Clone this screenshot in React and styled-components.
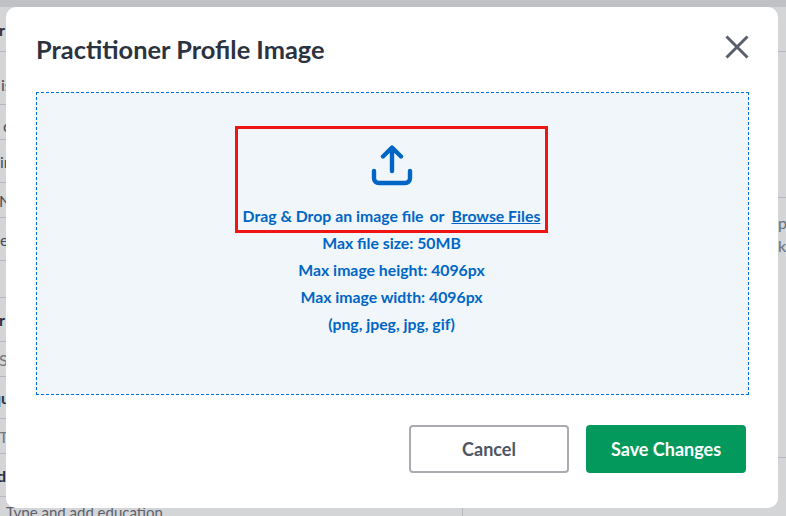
import React from "react";
import styled, { createGlobalStyle } from "styled-components";

const GlobalStyle = createGlobalStyle`
  html, body {
    margin: 0;
    height: 100%;
    overflow: hidden;
    background: #fff;
    font-family: "Lato", "Liberation Sans", sans-serif;
  }
  * {
    box-sizing: border-box;
  }
`;

const leftRows = [
  { height: 45, text: "r", strong: true, shift: -1 },
  { height: 53, text: "is", pad: 12, shift: 1 },
  { height: 35, text: "c", pad: 6, shift: 3 },
  { height: 43, text: "ir" },
  { height: 35, text: "N", shift: -1 },
  { height: 43, text: "e", shift: 0 },
  { height: 37, text: "" },
  { height: 44, text: "r", strong: true, shift: -1 },
  { height: 35, text: "S", muted: true, shift: -1 },
  { height: 42, text: "qu", strong: true, shift: -8 },
  { height: 35, text: "T", muted: true, shift: -1 },
  { height: 43, text: "d", strong: true, shift: -3 },
];

const limits = [
  "Max file size: 50MB",
  "Max image height: 4096px",
  "Max image width: 4096px",
  "(png, jpeg, jpg, gif)",
];

export default function App() {
  return (
    <>
      <GlobalStyle />
      <Page>
        <TopStrip />
        <Columns>
          <LeftColumn>
            {leftRows.map((row, id) => (
              <FormRow key={id} $height={row.height} $pad={row.pad}>
                <RowText $strong={row.strong} $muted={row.muted} $shift={row.shift}>
                  {row.text}
                </RowText>
              </FormRow>
            ))}
            <LastRow>Type and add education</LastRow>
          </LeftColumn>
          <RightColumn>
            <RightLine $height={45} />
            <RightBlock>
              <RightText>p</RightText>
              <RightText>ke</RightText>
            </RightBlock>
          </RightColumn>
        </Columns>
      </Page>
      <Overlay>
        <Modal>
          <ModalHeader>
            <Title>Practitioner Profile Image</Title>
            <CloseButton aria-label="Close">
              <svg width="24" height="24" viewBox="0 0 24 24" fill="none">
                <path
                  d="M1.5 1.5L22.5 22.5M22.5 1.5L1.5 22.5"
                  stroke="#5a606b"
                  strokeWidth="3"
                />
              </svg>
            </CloseButton>
          </ModalHeader>
          <DropZone>
            <Highlight>
              <UploadIcon width="42" height="41" viewBox="0 0 42 41" fill="none">
                <path
                  d="M21 26V3M12 11.5L21 2.5L30 11.5"
                  stroke="#0066c5"
                  strokeWidth="4.4"
                  strokeLinecap="round"
                  strokeLinejoin="round"
                />
                <path
                  d="M3 26V33C3 36 5 38 8 38H34C37 38 39 36 39 33V26"
                  stroke="#0066c5"
                  strokeWidth="4.4"
                  strokeLinecap="round"
                />
              </UploadIcon>
              <DropText>
                <span>Drag &amp; Drop an image file</span>
                <span>or</span>
                <BrowseLink href="#">Browse Files</BrowseLink>
              </DropText>
            </Highlight>
            <Limits>
              {limits.map((line) => (
                <LimitLine key={line}>{line}</LimitLine>
              ))}
            </Limits>
          </DropZone>
          <Footer>
            <CancelButton>Cancel</CancelButton>
            <SaveButton>Save Changes</SaveButton>
          </Footer>
        </Modal>
      </Overlay>
    </>
  );
}

const Page = styled.div`
  height: 516px;
  display: flex;
  flex-direction: column;
  overflow: hidden;
`;

const TopStrip = styled.div`
  height: 7px;
  flex: none;
  background: #e5e7e8;
`;

const Columns = styled.div`
  flex: 1;
  display: flex;
  min-height: 0;
`;

const LeftColumn = styled.div`
  width: 463px;
  flex: none;
  border-right: 1px solid #dcdde0;
`;

const FormRow = styled.div`
  height: ${(p) => p.$height}px;
  padding-top: ${(p) => p.$pad || 0}px;
  display: flex;
  align-items: center;
  border-bottom: 1px solid #dcdde0;
`;

const RowText = styled.span`
  margin-left: ${(p) => p.$shift || 0}px;
  font-size: 16px;
  font-weight: ${(p) => (p.$strong ? 700 : 400)};
  color: ${(p) => (p.$strong ? "#2c3340" : p.$muted ? "#868b94" : "#4f5563")};
`;

const LastRow = styled.div`
  padding: 6px 0 0 6px;
  font-size: 15px;
  line-height: 18px;
  color: #6a707b;
`;

const RightColumn = styled.div`
  flex: 1;
  display: flex;
  flex-direction: column;
`;

const RightLine = styled.div`
  height: ${(p) => p.$height}px;
  flex: none;
  border-bottom: 1px solid #dcdde0;
`;

const RightBlock = styled.div`
  margin-top: 145px;
  height: 261px;
  padding: 13px 0 0 315px;
  border-top: 1px solid #dcdde0;
  border-bottom: 1px solid #dcdde0;
`;

const RightText = styled.div`
  font-size: 16px;
  line-height: 23px;
  color: #7a7f88;
`;

const Overlay = styled.div`
  position: fixed;
  inset: 0;
  padding: 7px 8px 8px 6px;
  background: rgba(39, 46, 57, 0.2);
`;

const Modal = styled.div`
  height: 501px;
  padding: 0 29px 0 30px;
  display: flex;
  flex-direction: column;
  background: #fff;
  border-radius: 10px;
`;

const ModalHeader = styled.div`
  height: 85px;
  padding-bottom: 2px;
  flex: none;
  display: flex;
  align-items: center;
  justify-content: space-between;
`;

const Title = styled.h2`
  margin: 0;
  font-size: 25.4px;
  font-weight: 700;
  color: #2c3340;
`;

const CloseButton = styled.button`
  width: 24px;
  height: 24px;
  margin: -3px 0 0 0;
  padding: 0;
  display: flex;
  border: none;
  background: none;
`;

const DropZone = styled.div`
  height: 303px;
  flex: none;
  padding: 33px 2px 0 0;
  display: flex;
  flex-direction: column;
  align-items: center;
  background: #f1f6fa;
  border: 1px dashed #0070dd;
`;

const Highlight = styled.div`
  width: 313px;
  height: 107px;
  padding-top: 16px;
  display: flex;
  flex-direction: column;
  align-items: center;
  border: 3px solid #f01414;
`;

const UploadIcon = styled.svg`
  flex: none;
  display: block;
`;

const DropText = styled.div`
  margin-top: 20px;
  display: flex;
  gap: 6px;
  font-size: 15.8px;
  line-height: 20px;
  font-weight: 700;
  color: #0066c5;
  white-space: nowrap;
`;

const BrowseLink = styled.a`
  margin-left: 1px;
  color: #0066c5;
  text-decoration: underline;
`;

const Limits = styled.div`
  margin-top: -4px;
  display: flex;
  flex-direction: column;
  align-items: center;
`;

const LimitLine = styled.div`
  height: 27px;
  font-size: 15.8px;
  line-height: 27px;
  font-weight: 700;
  color: #0066c5;
`;

const Footer = styled.div`
  margin-top: 30px;
  padding-right: 3px;
  display: flex;
  justify-content: flex-end;
  gap: 17px;
`;

const CancelButton = styled.button`
  width: 160px;
  height: 48px;
  font-family: inherit;
  font-size: 18px;
  font-weight: 700;
  color: #4f5563;
  background: #fff;
  border: 2px solid #a9abb0;
  border-radius: 4px;
`;

const SaveButton = styled.button`
  width: 160px;
  height: 48px;
  font-family: inherit;
  font-size: 18px;
  font-weight: 700;
  color: #fff;
  background: #03995c;
  border: none;
  border-radius: 4px;
`;
